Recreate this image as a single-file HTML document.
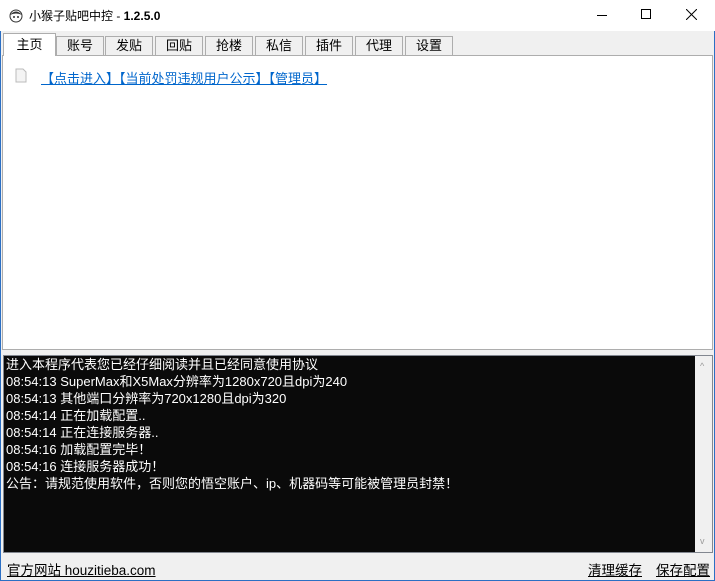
<!DOCTYPE html>
<html><head><meta charset="utf-8"><style>
*{margin:0;padding:0;box-sizing:border-box}
body{width:715px;height:581px;background:#f0f0f0;font-family:"Liberation Sans","Noto Sans CJK SC",sans-serif;font-size:12px;position:relative;overflow:hidden;color:#000}
.win{position:absolute;inset:0;border:1px solid #2b6fc4;border-top:none}
.title{position:absolute;left:0;top:0;width:715px;height:31px;background:#fff}
.title .t{position:absolute;left:29px;top:7px;font-size:12px}
.tab{position:absolute;top:36px;height:20px;border:1px solid #adadad;border-bottom:none;background:#f0f0f0;text-align:center;line-height:18px;font-size:13px}
.tab.sel{top:33px;height:23px;background:#fff;z-index:2;line-height:22px}
.panel{position:absolute;left:2px;top:55px;width:711px;height:295px;background:#fff;border:1px solid #adadad}
.link{position:absolute;left:41px;top:68px;color:#0066cc;text-decoration:underline;font-size:13px}
.log{position:absolute;left:3px;top:355px;width:710px;height:198px;background:#0a0a0a;border:1px solid #828790}
.log div{color:#fff;font-size:13px;line-height:17px;padding-left:2px;white-space:nowrap}
.sb{position:absolute;right:0;top:0;width:17px;height:196px;background:#f0f0f0}
.foot{position:absolute;top:559px;font-size:13.5px;text-decoration:underline}
</style></head><body>
<div class="win"></div>
<div class="title">
<svg style="position:absolute;left:8px;top:7px" width="16" height="16" viewBox="0 0 16 16"><circle cx="8" cy="9" r="6" fill="#fff" stroke="#333"/><path d="M2 8 Q8 1 14 8 Q8 5 2 8Z" fill="#333"/><circle cx="6" cy="10" r="1" fill="#333"/><circle cx="10" cy="10" r="1" fill="#333"/></svg>
<span class="t">小猴子贴吧中控 - <b>1.2.5.0</b></span>
<div style="position:absolute;left:597px;top:15px;width:10px;height:1px;background:#000"></div>
<div style="position:absolute;left:641px;top:9px;width:10px;height:10px;border:1px solid #000"></div>
<svg style="position:absolute;left:686px;top:9px" width="11" height="11"><path d="M0 0L11 11M11 0L0 11" stroke="#000"/></svg>
</div>
<div class="tab sel" style="left:3px;width:53px">主页</div>
<div class="tab" style="left:56px;width:48px">账号</div>
<div class="tab" style="left:105px;width:48px">发贴</div>
<div class="tab" style="left:155px;width:48px">回贴</div>
<div class="tab" style="left:205px;width:48px">抢楼</div>
<div class="tab" style="left:255px;width:48px">私信</div>
<div class="tab" style="left:305px;width:48px">插件</div>
<div class="tab" style="left:355px;width:48px">代理</div>
<div class="tab" style="left:405px;width:48px">设置</div>
<div class="panel"></div>
<svg style="position:absolute;left:15px;top:68px" width="12" height="15"><path d="M1 1H8L11 4V14H1Z" fill="#f4f4f4" stroke="#bbb"/></svg>
<span class="link">【点击进入】【当前处罚违规用户公示】【管理员】</span>
<div class="log">
<div>进入本程序代表您已经仔细阅读并且已经同意使用协议</div>
<div>08:54:13 SuperMax和X5Max分辨率为1280x720且dpi为240</div>
<div>08:54:13 其他端口分辨率为720x1280且dpi为320</div>
<div>08:54:14 正在加载配置..</div>
<div>08:54:14 正在连接服务器..</div>
<div>08:54:16 加载配置完毕！</div>
<div>08:54:16 连接服务器成功！</div>
<div>公告：请规范使用软件，否则您的悟空账户、ip、机器码等可能被管理员封禁！</div>
<div class="sb"><span style="position:absolute;left:5px;top:2px;font-size:9px;color:#999">^</span><span style="position:absolute;left:5px;bottom:2px;font-size:9px;color:#999">v</span></div>
</div>
<span class="foot" style="left:7px">官方网站 houzitieba.com</span>
<span class="foot" style="left:588px">清理缓存</span>
<span class="foot" style="left:656px">保存配置</span>
</body></html>
